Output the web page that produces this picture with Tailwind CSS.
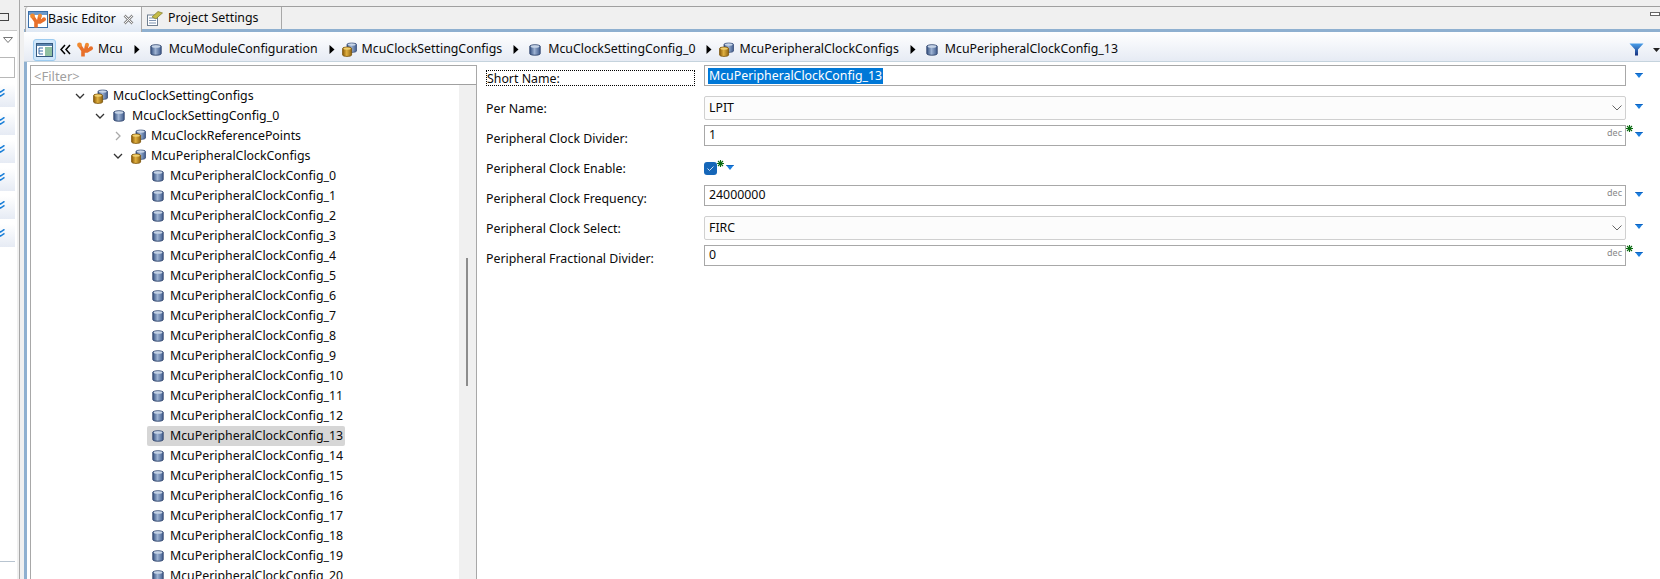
<!DOCTYPE html>
<html>
<head>
<meta charset="utf-8">
<script src="https://cdn.jsdelivr.net/npm/@tailwindcss/browser@4"></script>
</head>
<body class="w-[1660px] h-[579px] overflow-hidden bg-white text-[12.35px] text-[#0a0a0a] font-['Noto_Sans',sans-serif]">
<svg width="0" height="0" class="block h-0 w-0">
  <defs>
    <linearGradient id="bl" x1="0" x2="1" y1="0" y2="0"><stop offset="0" stop-color="#34507f"/><stop offset=".45" stop-color="#9db2d2"/><stop offset="1" stop-color="#3f5b8c"/></linearGradient>
    <linearGradient id="gd" x1="0" x2="1" y1="0" y2="0"><stop offset="0" stop-color="#8a5a08"/><stop offset=".45" stop-color="#e0b040"/><stop offset="1" stop-color="#8f6410"/></linearGradient>
    <linearGradient id="fn" x1="0" x2="0" y1="0" y2="1"><stop offset="0" stop-color="#4aa0ea"/><stop offset="1" stop-color="#16307f"/></linearGradient>
    <symbol id="cyl" viewBox="0 0 12 12">
      <path d="M.8 2.300C.8 .3 11.200 .3 11.200 2.300V9.700C11.200 11.700 .8 11.700 .8 9.700Z" fill="url(#bl)" stroke="#34486f" stroke-width=".9"/>
      <ellipse cx="6" cy="2.500" rx="4.400" ry="1.300" fill="#c5d3e6"/>
    </symbol>
    <symbol id="pair" viewBox="0 0 15 15">
      <path d="M5 2.500C5 .6 14.500 .6 14.500 2.500V9C14.500 10.800 5 10.800 5 9Z" fill="url(#bl)" stroke="#3a4f78" stroke-width=".8"/>
      <ellipse cx="9.700" cy="2.600" rx="4" ry="1.200" fill="#c9d6e8"/>
      <path d="M.6 6.500C.6 4.600 9.600 4.600 9.600 6.500V13C9.600 14.900 .6 14.900 .6 13Z" fill="url(#gd)" stroke="#7a5208" stroke-width=".8"/>
      <ellipse cx="5.100" cy="6.600" rx="3.800" ry="1.200" fill="#f0d070"/>
    </symbol>
    <symbol id="logo" viewBox="0 0 16 16">
      <path d="M2.500 3.500 6 8.500V14.500M6 9 10 9 14 6.500M9.800 3 8.500 9" fill="none" stroke="#e8702a" stroke-width="3.600"/>
      <circle cx="2.500" cy="3" r="2.400" fill="#f08a30"/><circle cx="10" cy="2.800" r="2" fill="#f08a30"/><circle cx="14" cy="6.300" r="2" fill="#e8702a"/>
    </symbol>
    <symbol id="tri" viewBox="0 0 8 5"><path d="M0 0H8L4 5Z" fill="#1c7fe0"/><path d="M0 0H8L7.200 1H.8Z" fill="#0f63c0"/></symbol>
    <symbol id="next" viewBox="0 0 6 9"><path d="M.5 0 5.500 4.500.5 9Z" fill="#000"/></symbol>
    <symbol id="star" viewBox="0 0 7 7"><path d="M3.500 0V7M0 3.500H7M1 1 6 6M6 1 1 6" stroke="#0b6b12" stroke-width="1.100" fill="none"/></symbol>
    <symbol id="dn" viewBox="0 0 10 6"><path d="M1 1 5 5 9 1" fill="none" stroke="#333" stroke-width="1.300"/></symbol>
    <symbol id="rt" viewBox="0 0 6 10"><path d="M1 1 5 5 1 9" fill="none" stroke="#aaa" stroke-width="1.300"/></symbol>
    <symbol id="sel" viewBox="0 0 10 6"><path d="M.5 .5 5 5 9.500 .5" fill="none" stroke="#666" stroke-width="1"/></symbol>
    <symbol id="dbl" viewBox="0 0 8 8"><path d="M.5 .8 3.500 3 7.500 .3M.5 4.800 3.500 7 7.500 4.300" fill="none" stroke="#1a7fd8" stroke-width="1.500"/></symbol>
  </defs>
</svg>
<div class="flex h-[579px] w-[1660px]">
  <aside class="flex w-[24px] shrink-0 bg-[#f0f0f0]">
    <div class="flex w-[17px] flex-col bg-white">
      <div class="h-[31px] bg-[#f0f0f0] border-b border-[#c8c8c8] pt-[13px]"><div class="h-[8px] w-[9px] border border-[#444] border-l-0"></div></div>
      <div class="flex h-[26px] justify-end pr-[4px] pt-[6px]"><svg width="10" height="6" viewBox="0 0 10 6"><path d="M.5.500H9.500L5 5.500Z" fill="#fff" stroke="#777"/></svg></div>
      <div class="h-[21px] w-[15px] border border-l-0 border-[#b8b8b8]"></div>
      <div class="mt-[6px] flex w-[15px] flex-col gap-[5px]">
        <div class="flex h-[23px] items-start overflow-hidden bg-gradient-to-b from-white to-[#e6ebf4] pt-[5px]"><svg width="8" height="8" class="-ml-[3px] shrink-0"><use href="#dbl"/></svg></div>
        <div class="flex h-[23px] items-start overflow-hidden bg-gradient-to-b from-white to-[#e6ebf4] pt-[5px]"><svg width="8" height="8" class="-ml-[3px] shrink-0"><use href="#dbl"/></svg></div>
        <div class="flex h-[23px] items-start overflow-hidden bg-gradient-to-b from-white to-[#e6ebf4] pt-[5px]"><svg width="8" height="8" class="-ml-[3px] shrink-0"><use href="#dbl"/></svg></div>
        <div class="flex h-[23px] items-start overflow-hidden bg-gradient-to-b from-white to-[#e6ebf4] pt-[5px]"><svg width="8" height="8" class="-ml-[3px] shrink-0"><use href="#dbl"/></svg></div>
        <div class="flex h-[23px] items-start overflow-hidden bg-gradient-to-b from-white to-[#e6ebf4] pt-[5px]"><svg width="8" height="8" class="-ml-[3px] shrink-0"><use href="#dbl"/></svg></div>
        <div class="flex h-[23px] items-start overflow-hidden bg-gradient-to-b from-white to-[#e6ebf4] pt-[5px]"><svg width="8" height="8" class="-ml-[3px] shrink-0"><use href="#dbl"/></svg></div>
      </div>
      <div class="mt-[314px] h-px w-[15px] bg-[#b8c4d0]"></div>
    </div>
    <div class="ml-[2px] w-px bg-[#a8a8a8]"></div>
  </aside>

  <main class="flex min-w-0 flex-1 flex-col">
    <div class="h-[6px] bg-[#f0f0f0]"></div>
    <div class="relative flex h-[26px] shrink-0 border-t border-b-[3px] border-t-[#a0a0a0] border-b-[#8fb0d0] bg-[#f0f0f0] pl-px">
      <div class="z-10 flex h-[25px] w-[117px] items-center rounded-tl-[3px] border-l border-r border-[#a8a8a8] border-b-0 bg-gradient-to-b from-white to-[#dfe8f4] pl-[2px]">
        <svg width="20" height="18" viewBox="0 0 20 18" class="shrink-0"><rect x=".5" y=".5" width="19" height="16" fill="#fff" stroke="#3a6ea8"/><rect x="1" y="1" width="18" height="3" fill="#6d9acb"/><use href="#logo" x="2" y="2" width="16" height="16"/></svg>
        <span class="whitespace-nowrap">Basic Editor</span>
        <svg width="11" height="11" viewBox="0 0 11 11" class="ml-[7px] shrink-0"><path d="M1.500 1.500 9.500 9.500M9.500 1.500 1.500 9.500" stroke="#8a8a8a" stroke-width="2.600"/><path d="M1.500 1.500 9.500 9.500M9.500 1.500 1.500 9.500" stroke="#f4f4f4" stroke-width="1"/></svg>
      </div>
      <div class="flex h-[22px] w-[140px] items-center border-r border-[#a8a8a8] pl-[5px]">
        <svg width="16" height="16" viewBox="0 0 16 16" class="shrink-0"><rect x=".5" y="5" width="10" height="10.500" fill="#fff" stroke="#6f7f90"/><path d="M2 8H9M2 10.500H9M2 13H9" stroke="#7d93b0"/><path d="M5 7 11 1.500 15.500 3 12 6 9 9Z" fill="#c4bc48" stroke="#80782a" stroke-width=".7"/></svg>
        <span class="ml-[5px] whitespace-nowrap">Project Settings</span>
      </div>
      <div class="flex flex-1 items-start justify-end pt-[5px]"><div class="h-[4px] w-[10px] border border-[#666] bg-white"></div></div>
    </div>

    <div class="flex h-[30px] shrink-0 items-center border-b border-[#c5d3dd] bg-gradient-to-b from-white to-[#e6ebf4] pl-[9px] pt-[6px]">
      <div class="flex h-[22px] w-[23px] shrink-0 items-center justify-center rounded-[3px] border border-[#9ccbf0] bg-[#cfe6fa]">
        <svg width="17" height="14" viewBox="0 0 17 14"><rect x=".5" y=".5" width="16" height="13" fill="#fff" stroke="#36597f"/><rect x="1" y="1" width="15" height="2" fill="#5d86b0"/><rect x="9" y="4" width="7" height="9" fill="#8fc0a0"/><path d="M3 5H7M3 5V11M3 8H7M3 11H7" stroke="#3a6ea8" fill="none"/></svg>
      </div>
      <svg width="11" height="11" viewBox="0 0 11 11" class="ml-[4px] shrink-0"><path d="M5 1 1 5.500 5 10M10 1 6 5.500 10 10" fill="none" stroke="#000" stroke-width="1.500"/></svg>
      <svg width="16" height="16" class="ml-[6px] shrink-0"><use href="#logo"/></svg>
      <span class="ml-[5px] whitespace-nowrap">Mcu</span>
      <svg width="6" height="9" class="ml-[11px] shrink-0"><use href="#next"/></svg>
      <svg width="12" height="12" class="ml-[10px] shrink-0"><use href="#cyl"/></svg>
      <span class="ml-[7px] whitespace-nowrap">McuModuleConfiguration</span>
      <svg width="6" height="9" class="ml-[11px] shrink-0"><use href="#next"/></svg>
      <svg width="15" height="15" class="ml-[7px] shrink-0"><use href="#pair"/></svg>
      <span class="ml-[5px] whitespace-nowrap">McuClockSettingConfigs</span>
      <svg width="6" height="9" class="ml-[11px] shrink-0"><use href="#next"/></svg>
      <svg width="12" height="12" class="ml-[10px] shrink-0"><use href="#cyl"/></svg>
      <span class="ml-[7px] whitespace-nowrap">McuClockSettingConfig_0</span>
      <svg width="6" height="9" class="ml-[11px] shrink-0"><use href="#next"/></svg>
      <svg width="15" height="15" class="ml-[7px] shrink-0"><use href="#pair"/></svg>
      <span class="ml-[5px] whitespace-nowrap">McuPeripheralClockConfigs</span>
      <svg width="6" height="9" class="ml-[11px] shrink-0"><use href="#next"/></svg>
      <svg width="12" height="12" class="ml-[10px] shrink-0"><use href="#cyl"/></svg>
      <span class="ml-[7px] whitespace-nowrap">McuPeripheralClockConfig_13</span>
      <div class="ml-auto flex shrink-0 items-center">
        <svg width="15" height="13" viewBox="0 0 15 13"><path d="M.5.500H14.500L9 6.500V12.500H6V6.500Z" fill="url(#fn)"/></svg>
        <svg width="7" height="4" viewBox="0 0 7 4" class="ml-[9px]"><path d="M0 0H7L3.500 4Z" fill="#222"/></svg>
      </div>
    </div>

    <div class="flex min-h-0 flex-1 border-l-[3px] border-l-[#8fb0d0]">
      <section class="ml-[3px] mt-[3px] flex w-[447px] shrink-0 flex-col border-x border-t border-[#a8a8a8]">
        <div class="flex h-[19px] shrink-0 items-center border-b border-[#a0a0a0] pl-[3px] pt-[3px] text-[13px] text-[#a0a0a0]">&lt;Filter&gt;</div>
        <div class="flex min-h-0 flex-1">
          <div class="min-w-0 flex-1 overflow-hidden pt-px">
            <div class="flex h-[20px] items-center pl-[44px]"><svg width="10" height="6"><use href="#dn"/></svg><svg width="15" height="15" class="ml-[8px]"><use href="#pair"/></svg><span class="ml-[5px] whitespace-nowrap">McuClockSettingConfigs</span></div>
            <div class="flex h-[20px] items-center pl-[64px]"><svg width="10" height="6"><use href="#dn"/></svg><svg width="12" height="12" class="ml-[8px]"><use href="#cyl"/></svg><span class="ml-[7px] whitespace-nowrap">McuClockSettingConfig_0</span></div>
            <div class="flex h-[20px] items-center pl-[84px]"><svg width="6" height="10"><use href="#rt"/></svg><svg width="15" height="15" class="ml-[10px]"><use href="#pair"/></svg><span class="ml-[5px] whitespace-nowrap">McuClockReferencePoints</span></div>
            <div class="flex h-[20px] items-center pl-[82px]"><svg width="10" height="6"><use href="#dn"/></svg><svg width="15" height="15" class="ml-[8px]"><use href="#pair"/></svg><span class="ml-[5px] whitespace-nowrap">McuPeripheralClockConfigs</span></div>
            <div class="flex h-[20px] w-[198px] items-center ml-[116px] pl-[5px]"><svg width="12" height="12"><use href="#cyl"/></svg><span class="ml-[6px] whitespace-nowrap">McuPeripheralClockConfig_0</span></div>
            <div class="flex h-[20px] w-[198px] items-center ml-[116px] pl-[5px]"><svg width="12" height="12"><use href="#cyl"/></svg><span class="ml-[6px] whitespace-nowrap">McuPeripheralClockConfig_1</span></div>
            <div class="flex h-[20px] w-[198px] items-center ml-[116px] pl-[5px]"><svg width="12" height="12"><use href="#cyl"/></svg><span class="ml-[6px] whitespace-nowrap">McuPeripheralClockConfig_2</span></div>
            <div class="flex h-[20px] w-[198px] items-center ml-[116px] pl-[5px]"><svg width="12" height="12"><use href="#cyl"/></svg><span class="ml-[6px] whitespace-nowrap">McuPeripheralClockConfig_3</span></div>
            <div class="flex h-[20px] w-[198px] items-center ml-[116px] pl-[5px]"><svg width="12" height="12"><use href="#cyl"/></svg><span class="ml-[6px] whitespace-nowrap">McuPeripheralClockConfig_4</span></div>
            <div class="flex h-[20px] w-[198px] items-center ml-[116px] pl-[5px]"><svg width="12" height="12"><use href="#cyl"/></svg><span class="ml-[6px] whitespace-nowrap">McuPeripheralClockConfig_5</span></div>
            <div class="flex h-[20px] w-[198px] items-center ml-[116px] pl-[5px]"><svg width="12" height="12"><use href="#cyl"/></svg><span class="ml-[6px] whitespace-nowrap">McuPeripheralClockConfig_6</span></div>
            <div class="flex h-[20px] w-[198px] items-center ml-[116px] pl-[5px]"><svg width="12" height="12"><use href="#cyl"/></svg><span class="ml-[6px] whitespace-nowrap">McuPeripheralClockConfig_7</span></div>
            <div class="flex h-[20px] w-[198px] items-center ml-[116px] pl-[5px]"><svg width="12" height="12"><use href="#cyl"/></svg><span class="ml-[6px] whitespace-nowrap">McuPeripheralClockConfig_8</span></div>
            <div class="flex h-[20px] w-[198px] items-center ml-[116px] pl-[5px]"><svg width="12" height="12"><use href="#cyl"/></svg><span class="ml-[6px] whitespace-nowrap">McuPeripheralClockConfig_9</span></div>
            <div class="flex h-[20px] w-[198px] items-center ml-[116px] pl-[5px]"><svg width="12" height="12"><use href="#cyl"/></svg><span class="ml-[6px] whitespace-nowrap">McuPeripheralClockConfig_10</span></div>
            <div class="flex h-[20px] w-[198px] items-center ml-[116px] pl-[5px]"><svg width="12" height="12"><use href="#cyl"/></svg><span class="ml-[6px] whitespace-nowrap">McuPeripheralClockConfig_11</span></div>
            <div class="flex h-[20px] w-[198px] items-center ml-[116px] pl-[5px]"><svg width="12" height="12"><use href="#cyl"/></svg><span class="ml-[6px] whitespace-nowrap">McuPeripheralClockConfig_12</span></div>
            <div class="flex h-[20px] w-[198px] items-center ml-[116px] pl-[5px] rounded-[2px] bg-[#d6d6d6]"><svg width="12" height="12"><use href="#cyl"/></svg><span class="ml-[6px] whitespace-nowrap">McuPeripheralClockConfig_13</span></div>
            <div class="flex h-[20px] w-[198px] items-center ml-[116px] pl-[5px]"><svg width="12" height="12"><use href="#cyl"/></svg><span class="ml-[6px] whitespace-nowrap">McuPeripheralClockConfig_14</span></div>
            <div class="flex h-[20px] w-[198px] items-center ml-[116px] pl-[5px]"><svg width="12" height="12"><use href="#cyl"/></svg><span class="ml-[6px] whitespace-nowrap">McuPeripheralClockConfig_15</span></div>
            <div class="flex h-[20px] w-[198px] items-center ml-[116px] pl-[5px]"><svg width="12" height="12"><use href="#cyl"/></svg><span class="ml-[6px] whitespace-nowrap">McuPeripheralClockConfig_16</span></div>
            <div class="flex h-[20px] w-[198px] items-center ml-[116px] pl-[5px]"><svg width="12" height="12"><use href="#cyl"/></svg><span class="ml-[6px] whitespace-nowrap">McuPeripheralClockConfig_17</span></div>
            <div class="flex h-[20px] w-[198px] items-center ml-[116px] pl-[5px]"><svg width="12" height="12"><use href="#cyl"/></svg><span class="ml-[6px] whitespace-nowrap">McuPeripheralClockConfig_18</span></div>
            <div class="flex h-[20px] w-[198px] items-center ml-[116px] pl-[5px]"><svg width="12" height="12"><use href="#cyl"/></svg><span class="ml-[6px] whitespace-nowrap">McuPeripheralClockConfig_19</span></div>
            <div class="flex h-[20px] w-[198px] items-center ml-[116px] pl-[5px]"><svg width="12" height="12"><use href="#cyl"/></svg><span class="ml-[6px] whitespace-nowrap">McuPeripheralClockConfig_20</span></div>
          </div>
          <div class="w-[17px] shrink-0 bg-[#f0f0f0] pl-[7px] pt-[173px]"><div class="h-[128px] w-[2px] bg-[#8c8c8c]"></div></div>
        </div>
      </section>

      <section class="min-w-0 flex-1 pl-[9px]">
        <div class="flex h-[30px]">
          <div class="mt-[8px] flex h-[16px] w-[209px] shrink-0 items-center border border-dotted border-black pt-[2px] whitespace-nowrap">Short Name:</div>
          <div class="ml-[9px] mt-[3px] h-[21px] w-[922px] shrink-0 border border-[#a8a8a8] pl-[3px] pt-[2px]"><span class="block h-[16px] w-fit bg-[#0078d7] px-px leading-[16px] text-white">McuPeripheralClockConfig_13</span></div>
          <svg width="8" height="5" class="ml-[9px] mt-[11px] shrink-0"><use href="#tri"/></svg>
        </div>
        <div class="flex h-[30px]">
          <div class="mt-[8px] flex h-[16px] w-[209px] shrink-0 items-center pt-[2px] whitespace-nowrap">Per Name:</div>
          <div class="ml-[9px] mt-[4px] flex h-[24px] w-[922px] shrink-0 items-center justify-between rounded-[2px] border border-[#d0d0d0] bg-[#fcfcfc] pl-[4px] pr-[3px]"><span>LPIT</span><svg width="10" height="6"><use href="#sel"/></svg></div>
          <svg width="8" height="5" class="ml-[9px] mt-[12px] shrink-0"><use href="#tri"/></svg>
        </div>
        <div class="flex h-[30px]">
          <div class="mt-[8px] flex h-[16px] w-[209px] shrink-0 items-center pt-[2px] whitespace-nowrap">Peripheral Clock Divider:</div>
          <div class="ml-[9px] mt-[3px] flex h-[21px] w-[922px] shrink-0 items-start justify-between border border-[#a8a8a8] pl-[4px] pr-[3px]"><span class="leading-[18px]">1</span><span class="text-[9px] leading-[14px] text-[#888]">dec</span></div>
          <svg width="7" height="7" class="mt-[3px] shrink-0"><use href="#star"/></svg>
          <svg width="8" height="5" class="ml-[2px] mt-[10px] shrink-0"><use href="#tri"/></svg>
        </div>
        <div class="flex h-[30px]">
          <div class="mt-[8px] flex h-[16px] w-[209px] shrink-0 items-center pt-[2px] whitespace-nowrap">Peripheral Clock Enable:</div>
          <div class="ml-[9px] mt-[10px] flex h-[13px] w-[13px] shrink-0 items-center justify-center rounded-[3px] bg-[#1566b8]"><svg width="9" height="9" viewBox="0 0 9 9"><path d="M1.500 4.500 3.500 6.500 7.500 2.500" fill="none" stroke="#cfe0f5" stroke-width="1"/></svg></div>
          <svg width="7" height="7" class="mt-[8px] shrink-0"><use href="#star"/></svg>
          <svg width="8" height="5" class="ml-[2px] mt-[13px] shrink-0"><use href="#tri"/></svg>
        </div>
        <div class="flex h-[30px]">
          <div class="mt-[8px] flex h-[16px] w-[209px] shrink-0 items-center pt-[2px] whitespace-nowrap">Peripheral Clock Frequency:</div>
          <div class="ml-[9px] mt-[3px] flex h-[21px] w-[922px] shrink-0 items-start justify-between border border-[#a8a8a8] pl-[4px] pr-[3px]"><span class="leading-[18px]">24000000</span><span class="text-[9px] leading-[14px] text-[#888]">dec</span></div>
          <svg width="8" height="5" class="ml-[9px] mt-[10px] shrink-0"><use href="#tri"/></svg>
        </div>
        <div class="flex h-[30px]">
          <div class="mt-[8px] flex h-[16px] w-[209px] shrink-0 items-center pt-[2px] whitespace-nowrap">Peripheral Clock Select:</div>
          <div class="ml-[9px] mt-[4px] flex h-[24px] w-[922px] shrink-0 items-center justify-between rounded-[2px] border border-[#d0d0d0] bg-[#fcfcfc] pl-[4px] pr-[3px]"><span>FIRC</span><svg width="10" height="6"><use href="#sel"/></svg></div>
          <svg width="8" height="5" class="ml-[9px] mt-[12px] shrink-0"><use href="#tri"/></svg>
        </div>
        <div class="flex h-[30px]">
          <div class="mt-[8px] flex h-[16px] w-[209px] shrink-0 items-center pt-[2px] whitespace-nowrap">Peripheral Fractional Divider:</div>
          <div class="ml-[9px] mt-[3px] flex h-[21px] w-[922px] shrink-0 items-start justify-between border border-[#a8a8a8] pl-[4px] pr-[3px]"><span class="leading-[18px]">0</span><span class="text-[9px] leading-[14px] text-[#888]">dec</span></div>
          <svg width="7" height="7" class="mt-[3px] shrink-0"><use href="#star"/></svg>
          <svg width="8" height="5" class="ml-[2px] mt-[10px] shrink-0"><use href="#tri"/></svg>
        </div>
      </section>
    </div>
  </main>
</div>
</body>
</html>
